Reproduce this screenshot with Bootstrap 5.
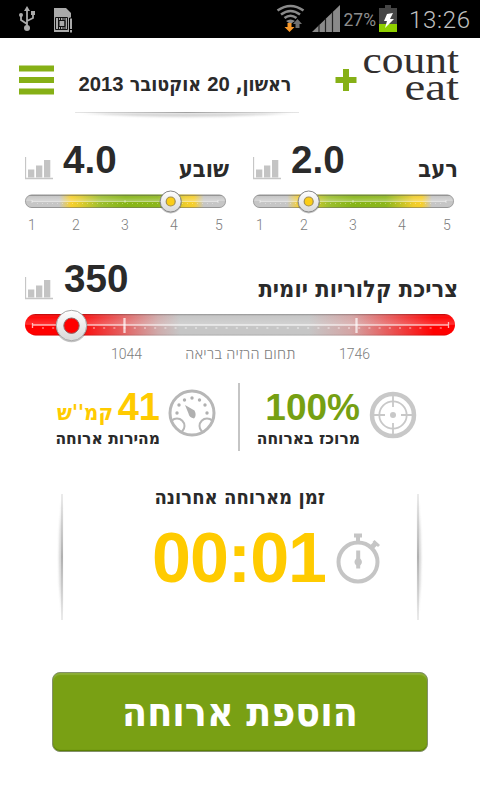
<!DOCTYPE html>
<html lang="he">
<head>
<meta charset="utf-8">
<meta name="viewport" content="width=device-width, initial-scale=1">
<title>Count Eat</title>
<link href="https://cdn.jsdelivr.net/npm/bootstrap@5.3.0/dist/css/bootstrap.min.css" rel="stylesheet">
<style>
body{width:480px;height:800px;overflow:hidden;background:#fff;color:#2a2a2a;font-family:"DejaVu Sans Condensed","DejaVu Sans",sans-serif}
svg{display:block;flex:none}
.latin{font-family:"Liberation Sans",Arial,sans-serif}
.he{font-weight:700;line-height:1;white-space:nowrap}
.statusbar{height:38px;background:#000}
.topbar{height:92px}
.date{width:222px;margin:36px 0 0 21px;font-size:19.6px}
.date .he{height:21px;margin-left:-2px}
.date .latin{font-size:20.3px;line-height:1}
.line{margin:17px 0 0 0}
.dials{height:100px;padding-left:12px}
.dial{width:228px}
.dial-head{height:64px}
.dial-title{font-size:23.5px}
.value{font:700 38.6px/39px "Liberation Sans",Arial,sans-serif}
.scale{display:grid;grid-template-columns:40px 48px 50px 48px 42px;text-align:center;padding-top:3px}
.scale,.range{font:300 14px/16px Roboto,sans-serif;color:#7c7c7c}
.range-label{font-family:"Open Sans",sans-serif;font-size:14.500px;letter-spacing:.35px}
.stat{font-size:17.300px}
.stat-value{height:43px;padding-top:5px}
.stat-value .value{font-size:38px}
.yellow{color:#ffcb00}.green{color:#76a012}
.timer{font-size:70px;line-height:70px;letter-spacing:-1px}
.add{width:376px;height:80px;margin-left:52px;background:#79a014!important;border:1px solid #83916b!important;border-radius:8px;box-shadow:inset 0 2px 1px #8cae36,inset 0 -1px 1px #587c00;color:#fff!important;font-size:40.700px;font-weight:700;line-height:1;padding:0}
</style>
</head>
<body>
<header class="statusbar">
<svg width="480" height="38" viewBox="0 0 480 38">
<g fill="none" stroke="#aaa" stroke-width="1.8"><path d="M27 9v19M27 24l-6-4v-5M27 21l6-3v-4"/></g>
<g fill="#aaa"><path d="M27 6l3 5h-6zM31 11h4v4h-4z"/><circle cx="21" cy="15" r="2"/><circle cx="27" cy="28" r="3"/>
<path d="M54 8h12l5 5v19H54z"/><path d="M69.500 18h3v15h-3z" stroke="#000" stroke-width="1"/></g>
<path d="M69 29.500h4" stroke="#000"/>
<g fill="none" stroke="#111"><path d="M55.500 17.500h12v12h-12zM58.500 18v12M65 18v12M59 20.500h6v6h-6zM60.500 18v2M63 18v2M60.500 27v2M63 27v2"/></g>
<g fill="none" stroke="#8a8a8a" stroke-width="2.600"><path d="M277.500 10.500q13-9 26 0M281 14.500q9.500-7 19 0M284.500 18q6-4.500 12 0"/></g><path d="M286 21q4.500-3 9 0l-4.500 3z" fill="#8a8a8a"/>
<path d="M287.500 23h4v4h3l-5 5-5-5h3z" fill="#f7982a"/><path d="M295.500 28v-4h-2.500l4.500-5 4.500 5h-2.500v4z" fill="#707070"/>
<path d="M312 32L340 5v27z" fill="#8a8a8a"/><path d="M319 25v7M325.500 19v13M332.500 12v20" stroke="#222" stroke-width="1.200"/>
<text x="343.500" y="26" font-family="Roboto,sans-serif" font-size="17.500" textLength="32.500" lengthAdjust="spacingAndGlyphs" fill="#8d8d8d">27%</text>
<path d="M385 5h6v3h6v24h-18V8h6z" fill="#454545"/><path d="M379 24h18v8h-18z" fill="#8fd000"/><path d="M387 14l6-1-3 6h4l-9 9 2-7h-3z" fill="#fff"/>
<text x="409" y="28" font-family="Roboto,sans-serif" font-weight="300" font-size="24" textLength="61" fill="#c0c0c0">13:26</text>
</svg>
</header>
<div class="topbar d-flex">
<svg width="35" height="30" viewBox="0 0 35 30" style="margin:27px 0 0 19px"><path d="M0 .500h35v6H0zM0 12h35v6H0zM0 23.500h35v6H0z" fill="#86b016"/></svg>
<div class="date">
<div class="he text-center" dir="rtl">ראשון, <span class="latin">20</span> אוקטובר <span class="latin">2013</span></div>
<svg class="line" width="224" height="8" viewBox="0 0 224 8"><defs><linearGradient id="fx"><stop stop-color="#ccc" stop-opacity=".5"/><stop offset=".5" stop-color="#a0a0a0"/><stop offset="1" stop-color="#ccc" stop-opacity=".5"/></linearGradient><filter id="b" x="-10%" y="-100%" width="120%" height="300%"><feGaussianBlur stdDeviation="2 1.200"/></filter></defs><path d="M8 1h208q-104 8-208 0z" fill="#aaa" opacity=".5" filter="url(#b)"/><path d="M0 0h224v1H0z" fill="url(#fx)"/></svg>
</div>
<svg width="130" height="70" viewBox="0 0 130 70" style="margin-left:38px"><path d="M8 31h6v8h7.500v6H14v8H8v-8H.500v-6H8z" fill="#86b016"/><g font-family="Liberation Serif,serif" font-size="37.500" fill="#332f2e"><text x="27.500" y="35" textLength="96.500" lengthAdjust="spacingAndGlyphs">count</text><text x="69.500" y="62" textLength="54.500" lengthAdjust="spacingAndGlyphs">eat</text></g></svg>
</div>
<main>
<section class="dials d-flex">
<div class="dial">
<div class="dial-head d-flex">
<svg width="30" height="24" viewBox="0 0 30 24" style="margin:27px 0 0 13px"><g id="bars"><path d="M.500 0v21.500H28" fill="none" stroke="#c6c6c6" stroke-width="1.300"/><path d="M3 12.500h6.300v8H3zM11 8.500h6.300v12H11zM19 3h6.300v17.500H19z" fill="#c4c4c4"/></g></svg>
<div class="value" style="margin:10px 0 0 8px">4.0</div>
<div class="he dial-title ms-auto" dir="rtl" style="margin-top:28px;margin-right:11px">שובע</div>
</div>
<svg width="228" height="26" viewBox="0 0 228 26" style="margin-top:-6px"><defs>
<linearGradient id="g"><stop offset=".17" stop-color="#c6c6c6"/><stop offset=".23" stop-color="#f7cf2b"/><stop offset=".27" stop-color="#e3cc2d"/><stop offset=".38" stop-color="#9cbf2e"/><stop offset=".5" stop-color="#86b516"/><stop offset=".66" stop-color="#8cb71c"/><stop offset=".8" stop-color="#f0cd2c"/><stop offset=".84" stop-color="#f7cf2b"/><stop offset=".89" stop-color="#c6c6c6"/></linearGradient>
<linearGradient id="s" x2="0" y2="1"><stop stop-color="#000" stop-opacity=".45"/><stop offset=".14" stop-color="#fff" stop-opacity=".05"/><stop offset=".48" stop-color="#fff" stop-opacity=".3"/><stop offset=".52" stop-color="#fff" stop-opacity="0"/><stop offset=".93" stop-color="#000" stop-opacity="0"/><stop offset="1" stop-color="#000" stop-opacity=".25"/></linearGradient>
<linearGradient id="k" x2="0" y2="1"><stop stop-color="#fff"/><stop offset="1" stop-color="#d8d8d8"/></linearGradient>
<g id="bar"><rect x="13" y="6.500" width="201" height="13.500" rx="6.700" fill="url(#g)"/><rect x="13.500" y="7" width="200" height="12.500" rx="6.200" fill="url(#s)" stroke="#777" stroke-opacity=".45"/><path d="M20 13.500h186M20 12v3M206 12v3M113 12v3" stroke="#fff" stroke-opacity=".5"/><path d="M25 15.500h178" stroke="#fff" stroke-opacity=".35" stroke-dasharray="1 4"/></g>
<g id="knob"><circle cy=".7" r="11.200" fill="#555" opacity=".35"/><circle r="10.500" fill="url(#k)" stroke="#888"/><circle r="4.500" fill="#fbcd18" stroke="#a08d50" stroke-width="1.200"/></g></defs>
<use href="#bar"/><use href="#knob" x="158.700" y="13.500"/></svg>
<div class="scale"><span>1</span><span>2</span><span>3</span><span>4</span><span>5</span></div>
</div>
<div class="dial">
<div class="dial-head d-flex">
<svg width="30" height="24" viewBox="0 0 30 24" style="margin:27px 0 0 13px"><use href="#bars"/></svg>
<div class="value" style="margin:10px 0 0 8px">2.0</div>
<div class="he dial-title ms-auto" dir="rtl" style="margin-top:28px;margin-right:10px">רעב</div>
</div>
<svg width="228" height="26" viewBox="0 0 228 26" style="margin-top:-6px"><use href="#bar"/><use href="#knob" x="68.700" y="13.500"/></svg>
<div class="scale"><span>1</span><span>2</span><span>3</span><span>4</span><span>5</span></div>
</div>
</section>
<section style="height:140px">
<div class="d-flex" style="height:73px;padding:0 22px 0 25px">
<svg width="30" height="24" viewBox="0 0 30 24" style="margin-top:47px"><use href="#bars"/></svg>
<div class="value" style="margin:29px 0 0 9px">350</div>
<div class="he dial-title ms-auto" dir="rtl" style="margin-top:48px">צריכת קלוריות יומית</div>
</div>
<svg width="480" height="36" viewBox="0 0 480 36" style="margin-top:4px"><defs><linearGradient id="r"><stop offset=".12" stop-color="#f00"/><stop offset=".31" stop-color="#cfabab"/><stop offset=".36" stop-color="#c6c6c6"/><stop offset=".66" stop-color="#c6c6c6"/><stop offset=".76" stop-color="#d4a4a4"/><stop offset=".95" stop-color="#f00"/></linearGradient></defs>
<rect x="25" y="7" width="430" height="21.500" rx="10.700" fill="url(#r)"/><rect x="25" y="7" width="430" height="21.500" rx="10.700" fill="url(#s)" opacity=".65"/>
<path d="M32 18h416M32.500 16v5M448.500 15v6" stroke="#fff" stroke-opacity=".7" stroke-width="1.300"/><path d="M124.500 11v15M356.500 11v15" stroke="#fff" stroke-opacity=".7" stroke-width="2.300"/><path d="M42 21h400" stroke="#fff" stroke-opacity=".7" stroke-dasharray="2 8.200"/>
<circle cx="71.500" cy="19.300" r="16" fill="#555" opacity=".35"/><circle cx="71.500" cy="18.500" r="15.200" fill="url(#k)" stroke="#aaa"/><circle cx="71.500" cy="18.700" r="7.700" fill="red" stroke="#8a6a6a"/></svg>
<div class="range d-flex" style="padding:3px 110px 0 111px"><span>1044</span><span dir="rtl" class="m-auto range-label">תחום הרזיה בריאה</span><span>1746</span></div>
</section>
<section class="d-flex" style="height:92px;padding:13px 0 0 55px">
<div style="width:105px">
<div class="stat-value d-flex align-items-baseline justify-content-between yellow" style="padding-left:2px"><span class="he" dir="rtl" style="font-size:22px">קמ''ש</span><span class="value">41</span></div>
<div class="he stat" dir="rtl" style="margin-top:4px">מהירות ארוחה</div>
</div>
<svg width="48" height="48" viewBox="0 0 48 48" style="margin:6px 0 0 8px"><defs><clipPath id="gc"><circle cx="24" cy="24" r="22"/></clipPath></defs><g fill="none" stroke="#b7b7b7"><circle cx="24" cy="24" r="22" stroke-width="3"/><g clip-path="url(#gc)" stroke-width="2"><circle cx="9" cy="37" r="7.500"/><circle cx="39" cy="37" r="7.500"/></g></g><g fill="#b0b0b0"><path d="M17 16l9.500 5.500q2.500 5-.500 8-5-1-5.500-5z"/><circle cx="9" cy="24" r="1.700"/><circle cx="11" cy="16" r="1.700"/><circle cx="16.500" cy="11" r="1.700"/><circle cx="24" cy="9" r="1.700"/><circle cx="31.500" cy="11" r="1.700"/><circle cx="37" cy="16" r="1.700"/><circle cx="39" cy="24" r="1.700"/></g></svg>
<div style="width:2px;height:68px;background:#c5c5c5;margin-left:22px"></div>
<div style="width:103px;margin-left:18px"><div class="stat-value text-end green" style="padding-right:1px"><div class="value text-nowrap" style="font-size:37px;margin-left:-10px">100%</div></div><div class="he stat" dir="rtl" style="margin-top:4px;padding-right:1px">מרוכז בארוחה</div></div>
<svg width="48" height="48" viewBox="0 0 48 48" style="margin:8px 0 0 8px"><g fill="none" stroke="#c8c8c8"><circle cx="24" cy="24" r="21" stroke-width="4.500"/><circle cx="24" cy="24" r="13.700" stroke-width="1.800"/><path d="M24 5v11M24 32v11M5 24h11M32 24h11" stroke-width="1.800"/></g><circle cx="24" cy="24" r="3" fill="#c8c8c8"/></svg>
</section>
<section class="d-flex" style="height:210px;padding:25px 0 0 52px">
<svg width="12" height="128" viewBox="0 0 12 128" style="margin-top:7px"><defs><linearGradient id="fy" x2="0" y2="1"><stop stop-color="#ddd" stop-opacity=".6"/><stop offset=".5" stop-color="#b0b0b0"/><stop offset="1" stop-color="#ddd" stop-opacity=".6"/></linearGradient><filter id="c" x="-200%" width="500%"><feGaussianBlur stdDeviation="1.200 2"/></filter></defs><path d="M10 8q-6 56 0 110z" fill="#999" opacity=".45" filter="url(#c)"/><path d="M9 0h2v126H9z" fill="url(#fy)"/></svg>
<div style="width:232px;margin-left:88px"><div class="he" dir="rtl" style="font-size:20.100px;padding-right:59px">זמן מארוחה אחרונה</div>
<div class="d-flex" style="margin-top:16px"><span class="yellow latin fw-bold timer">00:01</span>
<svg width="48" height="54" viewBox="0 0 48 54" style="margin:9px 0 0 8px"><g fill="none" stroke="#c5c5c5" stroke-width="4"><circle cx="24" cy="30" r="19.500"/><path d="M24 3v9"/><path d="M20 3.500h8"/><path d="M37 16l5-5" stroke-width="5"/><path d="M39.500 9l5.500 5" stroke-width="3"/></g><path d="M22.200 18.500h4v8q3.500 3.500 0 7v3h-4v-3q-3.500-3.500 0-7z" fill="#c5c5c5"/></svg></div></div>
<svg width="12" height="128" viewBox="0 0 12 128" style="margin:7px 0 0 30px"><path d="M4 8q6 56 0 110z" fill="#999" opacity=".45" filter="url(#c)"/><path d="M3 0h2v126H3z" fill="url(#fy)"/></svg>
</section>
<button class="add btn" dir="rtl">הוספת ארוחה</button>
</main>
<script src="https://cdn.jsdelivr.net/npm/bootstrap@5.3.0/dist/js/bootstrap.bundle.min.js"></script>
</body>
</html>
